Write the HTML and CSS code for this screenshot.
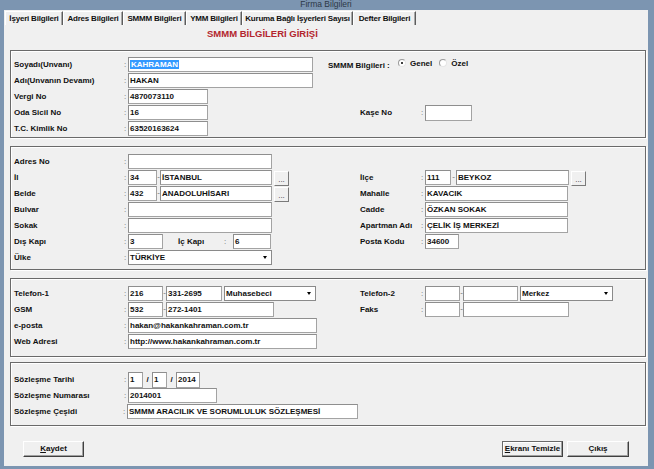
FILE: index.html
```html
<!DOCTYPE html>
<html lang="tr">
<head>
<meta charset="utf-8">
<title>Firma Bilgileri</title>
<link rel="stylesheet" href="styles.css">
</head>
<body>
<div class="win">
  <div class="caption"><span>Firma Bilgileri</span></div>
  <div class="client">
    <div class="tabs">
      <span class="tab t1">İşyeri Bilgileri</span>
      <span class="tab t2">Adres Bilgileri</span>
      <span class="tab t3 active">SMMM Bilgileri</span>
      <span class="tab t4">YMM Bilgileri</span>
      <span class="tab t5">Kuruma Bağlı İşyerleri Sayısı</span>
      <span class="tab t6">Defter Bilgileri</span>
    </div>
    <div class="heading">SMMM BİLGİLERİ GİRİŞİ</div>

    <div class="box b1">
      <div class="colL">
        <div class="row"><span class="lbl">Soyadı(Unvanı)</span><span class="c">:</span><span class="f w185"><span class="hl">KAHRAMAN</span></span></div>
        <div class="row"><span class="lbl">Adı(Unvanın Devamı)</span><span class="c">:</span><span class="f w185">HAKAN</span></div>
        <div class="row"><span class="lbl">Vergi No</span><span class="c">:</span><span class="f w80">4870073110</span></div>
        <div class="row"><span class="lbl">Oda Sicil No</span><span class="c">:</span><span class="f w80">16</span></div>
        <div class="row"><span class="lbl">T.C. Kimlik No</span><span class="c">:</span><span class="f w80">63520163624</span></div>
      </div>
      <div class="colR">
        <div class="row smmm"><span class="slbl">SMMM Bilgileri :</span><span class="radio on"></span><span class="rl">Genel</span><span class="radio"></span><span class="rl">Özel</span></div>
        <div class="row"></div>
        <div class="row"></div>
        <div class="row"><span class="lbl">Kaşe No</span><span class="c">:</span><span class="f w47 tall"></span></div>
      </div>
    </div>

    <div class="box b2">
      <div class="colL">
        <div class="row"><span class="lbl">Adres No</span><span class="c">:</span><span class="f w144"></span></div>
        <div class="row"><span class="lbl">İl</span><span class="c">:</span><span class="f w29">34</span><span class="d">-</span><span class="f w112">İSTANBUL</span><span class="dots">...</span></div>
        <div class="row"><span class="lbl">Belde</span><span class="c">:</span><span class="f w29">432</span><span class="d">-</span><span class="f w112">ANADOLUHİSARI</span><span class="dots">...</span></div>
        <div class="row"><span class="lbl">Bulvar</span><span class="c">:</span><span class="f w144"></span></div>
        <div class="row"><span class="lbl">Sokak</span><span class="c">:</span><span class="f w144"></span></div>
        <div class="row"><span class="lbl">Dış Kapı</span><span class="c">:</span><span class="f w35">3</span><span class="ilbl">İç Kapı</span><span class="ic">:</span><span class="f w38">6</span></div>
        <div class="row"><span class="lbl">Ülke</span><span class="c">:</span><span class="f sel w144"><span class="st">TÜRKİYE</span><span class="arr"></span></span></div>
      </div>
      <div class="colR">
        <div class="row"></div>
        <div class="row"><span class="lbl">İlçe</span><span class="c">:</span><span class="f w26">111</span><span class="d d4">-</span><span class="f w113">BEYKOZ</span><span class="dots">...</span></div>
        <div class="row"><span class="lbl">Mahalle</span><span class="c">:</span><span class="f w143">KAVACIK</span></div>
        <div class="row"><span class="lbl">Cadde</span><span class="c">:</span><span class="f w143">ÖZKAN SOKAK</span></div>
        <div class="row"><span class="lbl">Apartman Adı</span><span class="c">:</span><span class="f w143">ÇELİK İŞ MERKEZİ</span></div>
        <div class="row"><span class="lbl">Posta Kodu</span><span class="c">:</span><span class="f w34">34600</span></div>
      </div>
    </div>

    <div class="box b3">
      <div class="colL">
        <div class="row"><span class="lbl">Telefon-1</span><span class="c">:</span><span class="f w35">216</span><span class="d">-</span><span class="f w56">331-2695</span><span class="f sel w92 gap2"><span class="st">Muhasebeci</span><span class="arr"></span></span></div>
        <div class="row"><span class="lbl">GSM</span><span class="c">:</span><span class="f w35">532</span><span class="d">-</span><span class="f w108">272-1401</span></div>
        <div class="row"><span class="lbl">e-posta</span><span class="c">:</span><span class="f w189">hakan@hakankahraman.com.tr</span></div>
        <div class="row"><span class="lbl">Web Adresi</span><span class="c">:</span><span class="f w189">http://www.hakankahraman.com.tr</span></div>
      </div>
      <div class="colR">
        <div class="row"><span class="lbl">Telefon-2</span><span class="c">:</span><span class="f w35"></span><span class="d">-</span><span class="f w55"></span><span class="f sel w93 gap2"><span class="st">Merkez</span><span class="arr"></span></span></div>
        <div class="row"><span class="lbl">Faks</span><span class="c">:</span><span class="f w35"></span><span class="d">-</span><span class="f w106"></span></div>
      </div>
    </div>

    <div class="box b4">
      <div class="colL">
        <div class="row"><span class="lbl">Sözleşme Tarihi</span><span class="c">:</span><span class="f w15 tall">1</span><span class="sl">/</span><span class="f w15 tall">1</span><span class="sl">/</span><span class="f w24 tall">2014</span></div>
        <div class="row"><span class="lbl">Sözleşme Numarası</span><span class="c">:</span><span class="f w89">2014001</span></div>
        <div class="row"><span class="lbl">Sözleşme Çeşidi</span><span class="c">:</span><span class="f w231">SMMM ARACILIK VE SORUMLULUK SÖZLEŞMESİ</span></div>
      </div>
    </div>

    <div class="btns">
      <span class="btn"><span><u>K</u>aydet</span></span>
      <span class="spacer"></span>
      <span class="btn focus"><span><u>E</u>kranı Temizle</span></span>
      <span class="btn w62">Çıkış</span>
    </div>
  </div>
</div>
</body>
</html>
```

FILE: styles.css
```css
* { box-sizing: border-box; margin: 0; padding: 0; }
html, body { width: 654px; height: 469px; overflow: hidden; }
body {
  background: #7c95b1;
  font-family: "Liberation Sans", Arial, sans-serif;
  font-size: 8px;
  font-weight: bold;
  color: #111;
}
.win {
  width: 654px;
  height: 469px;
  display: flex;
  flex-direction: column;
  padding: 0 6px 3px 4px;
}
.caption {
  height: 10px;
  text-align: center;
  font-weight: normal;
  font-size: 8.5px;
  color: #2c3846;
}
.caption span { display: block; line-height: 9px; }

.client {
  flex: 1;
  background: #f0f0f0;
  display: flex;
  flex-direction: column;
  padding-top: 1px;
}

/* tabs */
.tabs { display: flex; height: 14px; margin-left: 1px; }
.tab {
  height: 14px;
  line-height: 13px;
  text-align: center;
  white-space: nowrap;
  border-top: 1px solid #fff;
  border-left: 1px solid #fff;
  border-right: 1px solid #5c5c5c;
  box-shadow: inset -1px 0 0 #a8a8a8;
  letter-spacing: -0.2px;
}
.t1 { width: 58px; }
.t2 { width: 60px; }
.t3 { width: 63px; }
.t4 { width: 56px; }
.t5 { width: 111px; }
.t6 { width: 63px; }

.heading {
  height: 18px;
  line-height: 18px;
  margin-bottom: 7px;
  padding-left: 203px;
  color: #b3262e;
  font-size: 9.5px;
}

/* group boxes */
.box {
  margin: 0 2px 0 6px;
  border: 1px solid #6a6a6a;
  box-shadow: inset 1px 1px 0 #fff, 1px 1px 0 #fff;
  display: flex;
  padding-left: 3px;
}
.b1 { padding-top: 6px; padding-bottom: 0; }
.b2 { margin-top: 8px; padding-top: 7px; padding-bottom: 3px; }
.b3 { margin-top: 8px; padding-top: 7px; padding-bottom: 6px; }
.b4 { margin-top: 5px; padding-top: 9px; padding-bottom: 5px; }

.colL { width: 344px; display: flex; flex-direction: column; }
.colR { flex: 1; display: flex; flex-direction: column; }
.row { height: 16px; display: flex; align-items: flex-start; }

.lbl { width: 110px; line-height: 15px; white-space: nowrap; }
.colR .lbl { width: 61px; margin-left: 2px; }
.c { width: 4px; line-height: 15px; color: #6a6a6a; font-weight: normal; }

.f {
  height: 15px;
  border: 1px solid #a3a3a3;
  border-top-color: #8e8e8e;
  border-left-color: #8e8e8e;
  background: #fff;
  line-height: 13px;
  padding-left: 1px;
  white-space: nowrap;
  overflow: hidden;
  flex: none;
}
.f.tall { height: 16px; line-height: 14px; }
.hl { background: #3399ff; color: #fff; padding: 0 1px; }

.d { width: 3px; text-align: center; line-height: 14px; color: #6a6a6a; font-weight: normal; }
.d4 { width: 5px; }
.sl { width: 9px; text-align: center; line-height: 16px; }

.dots {
  width: 15px;
  height: 15px;
  margin: 1px 0 0 2px;
  background: #f0f0f0;
  border-top: 1px solid #fff;
  border-left: 1px solid #fff;
  border-right: 1px solid #7a7a7a;
  border-bottom: 1px solid #7a7a7a;
  text-align: center;
  line-height: 15px;
  font-weight: normal;
  font-size: 8px;
  color: #333;
}

.ilbl { width: 46px; margin-left: 15px; line-height: 15px; }
.ic { width: 9px; line-height: 15px; color: #6a6a6a; font-weight: normal; }

.sel { display: flex; align-items: center; border-color: #8a8a8a; }
.sel .st { flex: 1; }
.arr {
  width: 0;
  height: 0;
  margin-right: 4px;
  border-left: 2.5px solid transparent;
  border-right: 2.5px solid transparent;
  border-top: 3px solid #000;
}
.gap2 { margin-left: 2px; }

/* radio */
.smmm { margin-left: -30px; align-items: center; height: 16px; }
.slbl { width: 70px; white-space: nowrap; line-height: 15px; }
.radio {
  width: 8px;
  height: 8px;
  border-radius: 50%;
  border: 1px solid #9a9a9a;
  border-right-color: #e6e6e6;
  border-bottom-color: #e6e6e6;
  background: #fff;
  display: flex;
  align-items: center;
  justify-content: center;
  margin-top: -4px;
}
.radio.on::after {
  content: "";
  width: 2px;
  height: 2px;
  background: #000;
  border-radius: 50%;
}
.rl { margin: 0 7px 0 4px; line-height: 15px; margin-top: -4px; }

/* widths */
.w15 { width: 15px; }
.w24 { width: 24px; }
.w26 { width: 26px; }
.w29 { width: 29px; }
.w34 { width: 34px; }
.w35 { width: 35px; }
.w38 { width: 38px; }
.w47 { width: 47px; }
.w55 { width: 55px; }
.w56 { width: 56px; }
.w80 { width: 80px; }
.w89 { width: 89px; }
.w92 { width: 92px; }
.w93 { width: 93px; }
.w106 { width: 106px; }
.w108 { width: 108px; }
.w112 { width: 112px; }
.w113 { width: 113px; }
.w143 { width: 143px; }
.w144 { width: 144px; }
.w185 { width: 185px; }
.w189 { width: 189px; }
.w231 { width: 231px; }

/* buttons */
.btns { display: flex; margin-top: 15px; padding: 0 19px; gap: 4px; }
.spacer { flex: 1; }
.btn {
  width: 61px;
  height: 16px;
  background: #f0f0f0;
  border-top: 1px solid #fff;
  border-left: 1px solid #fff;
  border-right: 1px solid #404040;
  border-bottom: 1px solid #404040;
  box-shadow: inset -1px -1px 0 #a0a0a0;
  text-align: center;
  line-height: 14px;
  white-space: nowrap;
}
.btn.focus { border-top-color: #6a6a6a; border-left-color: #6a6a6a; box-shadow: inset -1px -1px 0 #a0a0a0, inset 1px 1px 0 #fff; }
.btn.w62 { width: 62px; }
.btn u { text-decoration: underline; }
```
